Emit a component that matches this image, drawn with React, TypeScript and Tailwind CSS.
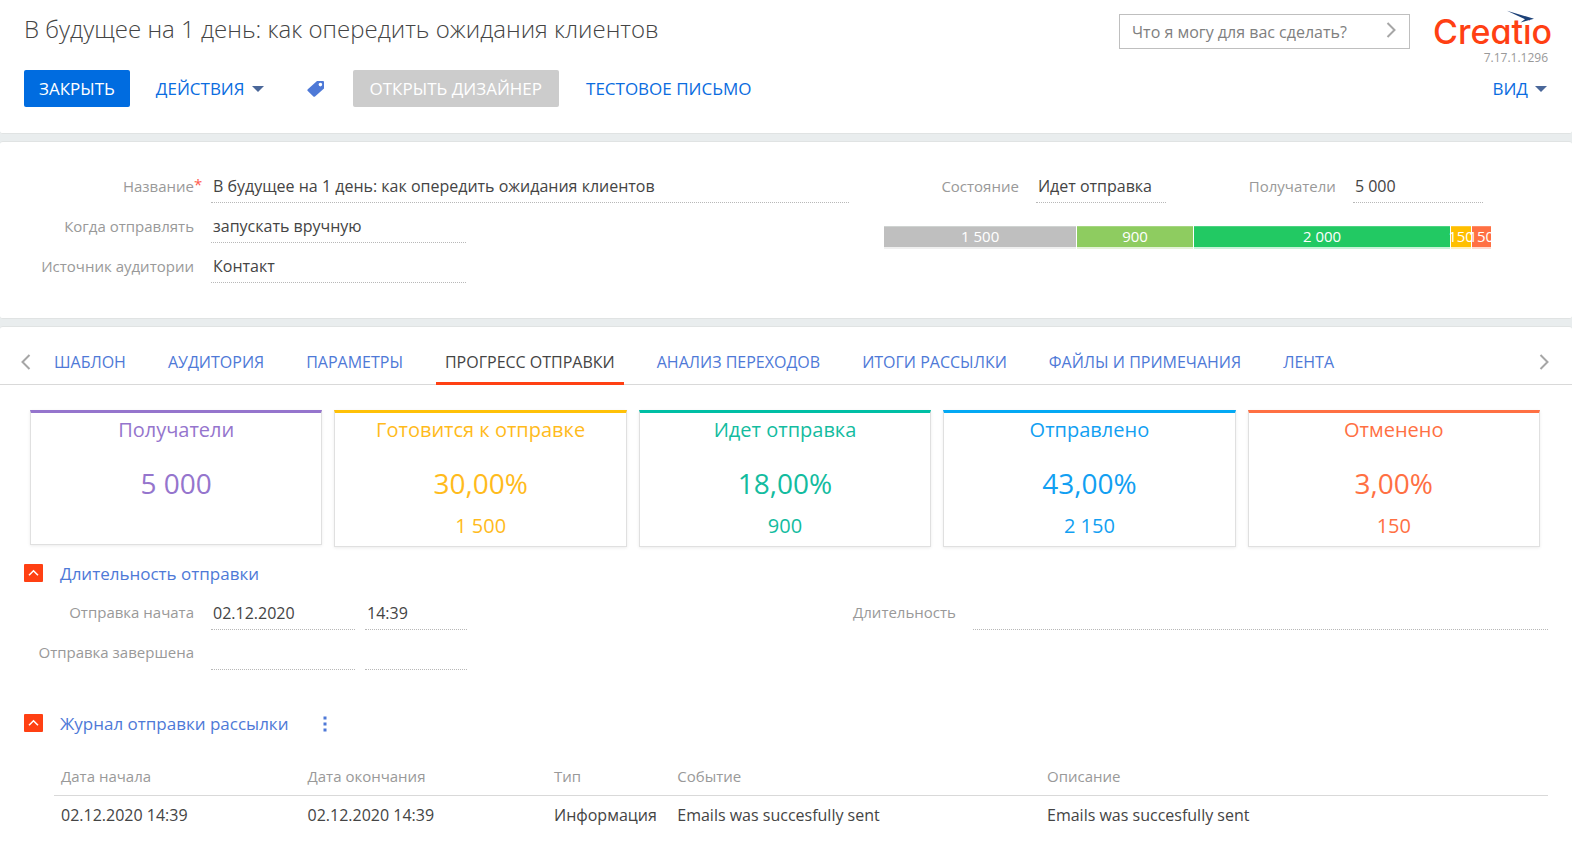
import { useState } from "react";

type Segment = { value: string; amount: number; color: string };

const segments: Segment[] = [
  { value: "1 500", amount: 1500, color: "bg-[#bfbfbf] border-t-[#cfd3d1] shadow-[0_2px_0_#efefef]" },
  { value: "900", amount: 900, color: "bg-[#8ecc60] border-t-[#a5d681] shadow-[0_2px_0_#e3f2d8]" },
  { value: "2 000", amount: 2000, color: "bg-[#22c963] border-t-[#4cd381] shadow-[0_2px_0_#c8f1d8]" },
  { value: "150", amount: 150, color: "bg-[#ffbf00] border-t-[#ffcb35] shadow-[0_2px_0_#fff0c0]" },
  { value: "150", amount: 150, color: "bg-[#ff7043] border-t-[#ff8b67] shadow-[0_2px_0_#ffdbd0]" },
];

const tabs = [
  "ШАБЛОН",
  "АУДИТОРИЯ",
  "ПАРАМЕТРЫ",
  "ПРОГРЕСС ОТПРАВКИ",
  "АНАЛИЗ ПЕРЕХОДОВ",
  "ИТОГИ РАССЫЛКИ",
  "ФАЙЛЫ И ПРИМЕЧАНИЯ",
  "ЛЕНТА",
];

const metrics = [
  { title: "Получатели", main: "5 000", sub: "", tone: "border-t-[#9575cd] text-[#9575cd]", height: "h-[135px]" },
  { title: "Готовится к отправке", main: "30,00%", sub: "1 500", tone: "border-t-[#ffc107] text-[#ffbb1c]", height: "h-[137px]" },
  { title: "Идет отправка", main: "18,00%", sub: "900", tone: "border-t-[#00bfa5] text-[#13bc9f]", height: "h-[137px]" },
  { title: "Отправлено", main: "43,00%", sub: "2 150", tone: "border-t-[#03a9f4] text-[#129ff2]", height: "h-[137px]" },
  { title: "Отменено", main: "3,00%", sub: "150", tone: "border-t-[#ff7043] text-[#ff7043]", height: "h-[137px]" },
];

const fieldInput =
  "block h-[29px] w-full min-w-0 border-b border-dotted border-[#b8b8b8] bg-transparent pb-[5px] pl-[2px] text-[16px] leading-[23px] text-[#444444] outline-none";
const fieldLabel = "text-right text-[15px] leading-[23px] text-[#999999]";

function Caret() {
  return (
    <svg width="12" height="6" viewBox="0 0 12 6" aria-hidden="true">
      <path d="M0 0h12L6 6z" fill="#4a6799" />
    </svg>
  );
}

function Chevron({ left = false }: { left?: boolean }) {
  return (
    <svg width="10" height="16" viewBox="0 0 10 16" fill="none" stroke="#a6a6a6" strokeWidth="2" aria-hidden="true">
      <path d={left ? "M8.5 1 1.5 8l7 7" : "M1.5 1l7 7-7 7"} />
    </svg>
  );
}

function Logo() {
  return (
    <div className="relative h-[37px] w-[115px]" role="img" aria-label="Creatio">
      <span className="absolute top-px left-0 font-['Inter',sans-serif] text-[34px] leading-[42px] font-medium text-[#ff4013] [font-feature-settings:'cv11']">
        Creatio
      </span>
      <svg className="absolute top-0 left-0" width="116" height="16" viewBox="0 0 116 16" aria-hidden="true">
        <rect x="86" y="4" width="10" height="10" fill="#ffffff" />
        <path d="M74 .8 101 8.8 87.5 12.6 92 9.2z" fill="#1c4178" />
      </svg>
    </div>
  );
}

function Header() {
  return (
    <header className="h-[134px] rounded-b-[3px] border-b border-[#e0e3e3] bg-white px-6">
      <div className="flex h-[70px] items-start justify-between">
        <h1 className="pt-[12px] text-[24px] leading-[33px] font-light text-[#444444]">
          В будущее на 1 день: как опередить ожидания клиентов
        </h1>
        <div className="flex">
          <form className="mt-[14px] flex h-[35px] w-[291px] items-center border border-[#bfbfbf] pr-[13px] pl-3" onSubmit={(e) => e.preventDefault()}>
            <input
              aria-label="Что я могу для вас сделать?"
              placeholder="Что я могу для вас сделать?"
              className="min-w-0 flex-1 text-[16px] leading-[22px] text-[#444444] outline-none placeholder:text-[#808080]"
            />
            <button aria-label="Найти" className="pb-1">
              <Chevron />
            </button>
          </form>
          <div className="mt-[10px] ml-[23px] flex flex-col items-end">
            <Logo />
            <span className="text-[12px] leading-[22px] text-[#999999]">7.17.1.1296</span>
          </div>
        </div>
      </div>
      <div className="flex h-[37px] items-center text-[17px] leading-[23px] text-[#0a6ce0]">
        <button className="h-[37px] rounded-[2px] bg-[#006ce0] px-[15px] text-white">ЗАКРЫТЬ</button>
        <button className="ml-[26px] flex items-center gap-[7px]">
          ДЕЙСТВИЯ <Caret />
        </button>
        <button aria-label="Теги" className="ml-[43px]">
          <svg width="18" height="18" viewBox="0 0 18 18" aria-hidden="true">
            <path
              fillRule="evenodd"
              fill="#4e79d7"
              d="M10 1h6a1 1 0 0 1 1 1v6.5L8 16.5a1.2 1.2 0 0 1-1.6 0L.8 11a1.2 1.2 0 0 1 0-1.7zM13.4 2.8a1.8 1.8 0 1 0 0 3.6 1.8 1.8 0 0 0 0-3.6z"
            />
          </svg>
        </button>
        <button className="ml-[28px] h-[37px] rounded-[2px] bg-[#cccccc] px-[17px] text-white">ОТКРЫТЬ ДИЗАЙНЕР</button>
        <button className="ml-[27px]">ТЕСТОВОЕ ПИСЬМО</button>
        <button className="ml-auto flex items-center gap-[7px] pr-px">
          ВИД <Caret />
        </button>
      </div>
    </header>
  );
}

function Summary() {
  return (
    <section className="grid h-[178px] grid-cols-[54fr_46fr] rounded-[3px] border-y border-[#e0e3e3] bg-white pt-[32px]">
      <div className="grid h-[109px] auto-rows-[40px] grid-cols-[194px_1fr] gap-x-[17px]">
        <label htmlFor="name" className={`${fieldLabel} pt-px`}>
          <span className="relative">
            Название
            <span className="absolute top-[-3px] left-full text-[#ff5a4d]">*</span>
          </span>
        </label>
        <input id="name" className={fieldInput} defaultValue="В будущее на 1 день: как опередить ожидания клиентов" />
        <label htmlFor="when" className={`${fieldLabel} pt-px`}>
          Когда отправлять
        </label>
        <div className="w-2/5">
          <input id="when" className={fieldInput} defaultValue="запускать вручную" />
        </div>
        <label htmlFor="source" className={`${fieldLabel} pt-px`}>
          Источник аудитории
        </label>
        <div className="w-2/5">
          <input id="source" className={fieldInput} defaultValue="Контакт" />
        </div>
      </div>
      <div className="pl-[35px]">
        <div className="flex">
          <label htmlFor="state" className={`${fieldLabel} w-[135px] pt-px`}>
            Состояние
          </label>
          <div className="ml-[17px] w-[130px]">
            <input id="state" className={fieldInput} defaultValue="Идет отправка" />
          </div>
          <label htmlFor="recipients" className={`${fieldLabel} w-[170px] pt-px`}>
            Получатели
          </label>
          <div className="ml-[17px] w-[130px]">
            <input id="recipients" className={fieldInput} defaultValue="5 000" />
          </div>
        </div>
        <div className="mt-[23px] flex h-[21px] w-[607px] max-w-full gap-px overflow-x-clip">
          {segments.map((s, i) => (
            <div
              key={i}
              className={`flex min-w-0 basis-0 justify-center border-t text-[15px] leading-[18px] font-medium whitespace-nowrap text-white ${s.color}`}
              style={{ flexGrow: s.amount }}
            >
              <span className="shrink-0">{s.value}</span>
            </div>
          ))}
        </div>
      </div>
    </section>
  );
}

function SectionToggle({ title, open, onToggle }: { title: string; open: boolean; onToggle: () => void }) {
  return (
    <button className="flex items-center gap-[17px] text-[17px] leading-[25px] text-[#4e79d7]" onClick={onToggle} aria-expanded={open}>
      <svg width="19" height="19" viewBox="0 0 19 19" aria-hidden="true">
        <rect width="19" height="18" rx="1" fill="#ff4013" />
        <path d={open ? "M5 11.2 9.5 6.8 14 11.2" : "M5 7 9.5 11.4 14 7"} fill="none" stroke="#ffffff" strokeWidth="1.6" />
      </svg>
      {title}
    </button>
  );
}

function Duration() {
  const [open, setOpen] = useState(true);
  return (
    <section className="mt-[14px]">
      <h2 className="px-6">
        <SectionToggle title="Длительность отправки" open={open} onToggle={() => setOpen(!open)} />
      </h2>
      {open && (
        <div className="mt-[15px] grid h-[110px] grid-cols-[54fr_46fr] pr-6">
          <div className="grid auto-rows-[40px] grid-cols-[194px_144px_102px] gap-x-[10px]">
            <label htmlFor="start-date" className={fieldLabel}>
              Отправка начата
            </label>
            <div className="ml-[7px] w-[144px]">
              <input id="start-date" className={fieldInput} defaultValue="02.12.2020" />
            </div>
            <div className="ml-[7px] w-[102px]">
              <input aria-label="Время начала" className={fieldInput} defaultValue="14:39" />
            </div>
            <label htmlFor="end-date" className={fieldLabel}>
              Отправка завершена
            </label>
            <div className="ml-[7px] w-[144px]">
              <input id="end-date" className={fieldInput} />
            </div>
            <div className="ml-[7px] w-[102px]">
              <input aria-label="Время завершения" className={fieldInput} />
            </div>
          </div>
          <div className="flex items-start gap-[17px] pl-3">
            <label htmlFor="duration" className={`${fieldLabel} w-[108px] shrink-0`}>
              Длительность
            </label>
            <input id="duration" className={fieldInput} />
          </div>
        </div>
      )}
    </section>
  );
}

function Journal() {
  const [open, setOpen] = useState(true);
  return (
    <section>
      <div className="flex items-center px-6">
        <h2>
          <SectionToggle title="Журнал отправки рассылки" open={open} onToggle={() => setOpen(!open)} />
        </h2>
        <button aria-label="Меню" className="ml-[35px]">
          <svg width="4" height="16" viewBox="0 0 4 16" fill="#4e79d7" aria-hidden="true">
            <path d="M.5 .5h3v3h-3zM.5 6.5h3v3h-3zM.5 12.5h3v3h-3z" />
          </svg>
        </button>
      </div>
      {open && (
        <div className="pt-[29px] pr-6 pl-[54px]">
          <table className="w-full table-fixed text-left">
            <colgroup>
              <col className="w-[16.5%]" />
              <col className="w-[16.5%]" />
              <col className="w-[8.25%]" />
              <col className="w-[24.75%]" />
              <col />
            </colgroup>
            <thead>
              <tr className="border-b border-[#d9d9d9] text-[15px] leading-[23px] text-[#999999]">
                {["Дата начала", "Дата окончания", "Тип", "Событие", "Описание"].map((h) => (
                  <th key={h} className="pb-[7px] pl-[7px] font-normal">
                    {h}
                  </th>
                ))}
              </tr>
            </thead>
            <tbody>
              <tr className="text-[16px] leading-[23px] whitespace-nowrap text-[#444444]">
                <td className="pt-[8px] pl-[7px]">02.12.2020 14:39</td>
                <td className="pt-[8px] pl-[7px]">02.12.2020 14:39</td>
                <td className="pt-[8px] pl-[7px]">Информация</td>
                <td className="pt-[8px] pl-[7px]">Emails was succesfully sent</td>
                <td className="pt-[8px] pl-[7px]">Emails was succesfully sent</td>
              </tr>
            </tbody>
          </table>
        </div>
      )}
    </section>
  );
}

export default function App() {
  const [active, setActive] = useState(3);
  return (
    <div className="flex min-h-screen flex-col gap-[7px] bg-[#e9edee] font-['Open_Sans',sans-serif]">
      <Header />
      <Summary />
      <main className="flex-1 rounded-t-[3px] border-t border-[#e0e3e3] bg-white">
        <nav className="flex h-[58px] items-stretch border-b border-[#d9d9d9] pr-[23px] pl-[21px]">
          <button aria-label="Предыдущие вкладки" className="pt-3">
            <Chevron left />
          </button>
          <div role="tablist" className="ml-[14px] flex flex-1 gap-6">
            {tabs.map((t, i) => (
              <button
                key={t}
                role="tab"
                aria-selected={i === active}
                onClick={() => setActive(i)}
                className={`mb-[-1px] border-b-[3px] px-[9px] pt-[14px] text-[16px] leading-[22px] whitespace-nowrap ${
                  i === active ? "border-[#ff4013] text-[#444444]" : "border-transparent text-[#4e79d7]"
                }`}
              >
                {t}
              </button>
            ))}
          </div>
          <button aria-label="Следующие вкладки" className="pt-3">
            <Chevron />
          </button>
        </nav>
        <div className="grid grid-cols-5 items-start gap-3 pt-[25px] pr-8 pl-[30px]">
          {metrics.map((m) => (
            <article
              key={m.title}
              className={`flex flex-col items-center border border-t-[3px] border-[#e0e0e0] text-center shadow-[0_1px_3px_rgba(0,0,0,0.08)] ${m.height} ${m.tone}`}
            >
              <h3 className="mt-1 text-[20px] leading-[26px] whitespace-nowrap">{m.title}</h3>
              <p className="mt-[21px] text-[28px] leading-[38px]">{m.main}</p>
              <p className="mt-[11px] text-[20px] leading-[26px]">{m.sub}</p>
            </article>
          ))}
        </div>
        <Duration />
        <Journal />
      </main>
    </div>
  );
}
